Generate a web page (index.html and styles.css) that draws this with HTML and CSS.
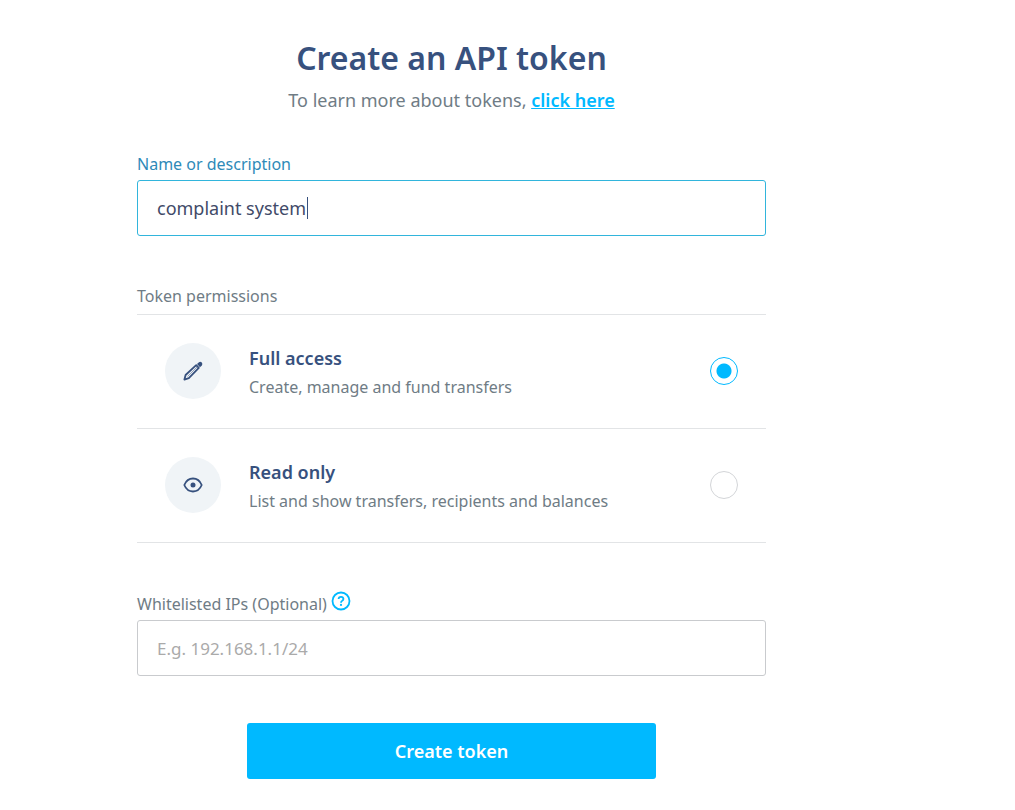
FILE: index.html
```html
<!DOCTYPE html>
<html lang="en">
<head>
<meta charset="utf-8">
<meta name="viewport" content="width=device-width, initial-scale=1">
<title>Create an API token</title>
<link rel="stylesheet" href="styles.css">
</head>
<body>
<main class="page">
  <header class="intro">
    <h1 class="title">Create an API token</h1>
    <p class="subtitle">To learn more about tokens, <a class="link" href="#">click here</a></p>
  </header>
  <form class="form">
    <div class="field">
      <label class="label label-active" for="name">Name or description</label>
      <div class="input-wrap">
        <input class="input input-active" id="name" type="text" value="complaint system">
        <span class="caret"></span>
      </div>
    </div>
    <fieldset class="permissions">
      <legend class="label">Token permissions</legend>
      <label class="option">
        <span class="badge">
          <svg width="20" height="20" viewBox="0 0 20 20" fill="none" stroke="#37517e" aria-hidden="true">
            <path d="M1.4 18.6 2.6 14 13.2 4.2 15.8 6.8 5.8 17.2Z" stroke-width="1.8" stroke-linejoin="round"/>
            <path d="M4.6 15.4 14 6" stroke-width=".5"/>
            <path d="M14 3.1 16 1.2Q17.5.3 18.8 1.6 20 3 18.8 4.4L17 6.2Z" fill="#37517e" stroke="none"/>
          </svg>
        </span>
        <span class="option-text">
          <span class="option-title">Full access</span>
          <span class="option-note">Create, manage and fund transfers</span>
        </span>
        <input class="radio" type="radio" name="permission" checked>
      </label>
      <label class="option">
        <span class="badge">
          <svg width="20" height="20" viewBox="0 0 20 20" fill="none" stroke="#37517e" aria-hidden="true">
            <path d="M1.3 10Q4 3.5 10 3.5T18.7 10Q16 16.5 10 16.5T1.3 10Z" stroke-width="1.8" stroke-linejoin="round"/>
            <circle cx="10" cy="10" r="2.5" fill="#37517e" stroke="none"/>
          </svg>
        </span>
        <span class="option-text">
          <span class="option-title">Read only</span>
          <span class="option-note">List and show transfers, recipients and balances</span>
        </span>
        <input class="radio" type="radio" name="permission">
      </label>
    </fieldset>
    <div class="field">
      <div class="label-row">
        <label class="label" for="ips">Whitelisted IPs (Optional)</label>
        <button class="help" type="button" aria-label="Help">
          <svg width="20" height="20" viewBox="0 0 20 20" fill="none" stroke="#00b9ff" aria-hidden="true">
            <circle cx="10" cy="10" r="8.5" stroke-width="1.8"/>
            <path d="M7.6 8Q7.7 5.8 10 5.8T12.4 7.9Q12.4 9 11.2 9.7 10 10.3 10 11.7" stroke-width="1.8"/>
            <circle cx="10" cy="13.9" r="1.1" fill="#00b9ff" stroke="none"/>
          </svg>
        </button>
      </div>
      <input class="input" id="ips" type="text" placeholder="E.g. 192.168.1.1/24">
    </div>
    <button class="submit" type="submit">Create token</button>
  </form>
</main>
</body>
</html>
```
FILE: styles.css
```css
* { box-sizing: border-box; }
body {
  margin: 0;
  background: #fff;
  color: #6f7c85;
  font-family: "Noto Sans", "Open Sans", sans-serif;
  font-size: 16px;
  line-height: 24px;
}
.page { padding: 36px 249px 30px 137px; }
.intro { text-align: center; }
.title { margin: 0; color: #37517e; font-size: 32px; line-height: 44px; font-weight: 600; }
.subtitle { margin: 8px 0 0; font-size: 18px; }
.link { color: #00b9ff; font-weight: 600; text-decoration: underline; }
.form { display: flex; flex-direction: column; margin-top: 40px; }
.field { display: flex; flex-direction: column; gap: 4px; }
.label { padding: 0; font-size: 16px; line-height: 24px; }
.label-active { color: #2e8ab8; }
.input-wrap { position: relative; display: flex; }
.input {
  width: 100%;
  height: 56px;
  padding: 0 19px;
  border: 1px solid #c9cbce;
  border-radius: 3px;
  background: #fff;
  color: #414a68;
  font: inherit;
  font-size: 18px;
  outline: none;
}
.input-active { border-color: #32b5dc; }
.input::placeholder { color: #aaa; font-size: 17px; opacity: 1; }
.caret { position: absolute; left: 170px; top: 17px; width: 1px; height: 22px; background: #37517e; }
.permissions { min-width: 0; margin: 48px 0 0; padding: 0; border: 0; }
.option {
  display: flex;
  align-items: center;
  gap: 28px;
  padding: 28px 28px 29px;
  border-bottom: 1px solid #e2e4e6;
}
.permissions .label { width: 100%; padding-bottom: 6px; border-bottom: 1px solid #e2e4e6; }
.badge {
  display: flex;
  flex: none;
  align-items: center;
  justify-content: center;
  width: 56px;
  height: 56px;
  border-radius: 50%;
  background: #f0f4f7;
}
.option-text { display: flex; flex: 1; flex-direction: column; gap: 5px; padding-top: 3px; }
.option-title { color: #37517e; font-size: 18px; font-weight: 600; }
.option-note { font-size: 16px; }
.radio {
  appearance: none;
  flex: none;
  width: 28px;
  height: 28px;
  margin: 0;
  border: 1px solid #d3d5d8;
  border-radius: 50%;
  background: #fff;
}
.radio:checked { border-color: #00b9ff; background: radial-gradient(circle, #00b9ff 7px, #fff 8px); }
.permissions + .field { margin-top: 45px; }
.label-row { display: flex; align-items: flex-start; gap: 4px; }
.label-row .label { padding-top: 4px; }
.help { display: flex; padding: 3px 0 0; border: 0; background: none; }
.submit {
  align-self: center;
  width: 65%;
  height: 56px;
  margin-top: 47px;
  border: 0;
  border-radius: 3px;
  background: #00b9ff;
  color: #fff;
  font: inherit;
  font-size: 18px;
  font-weight: 600;
}
```
